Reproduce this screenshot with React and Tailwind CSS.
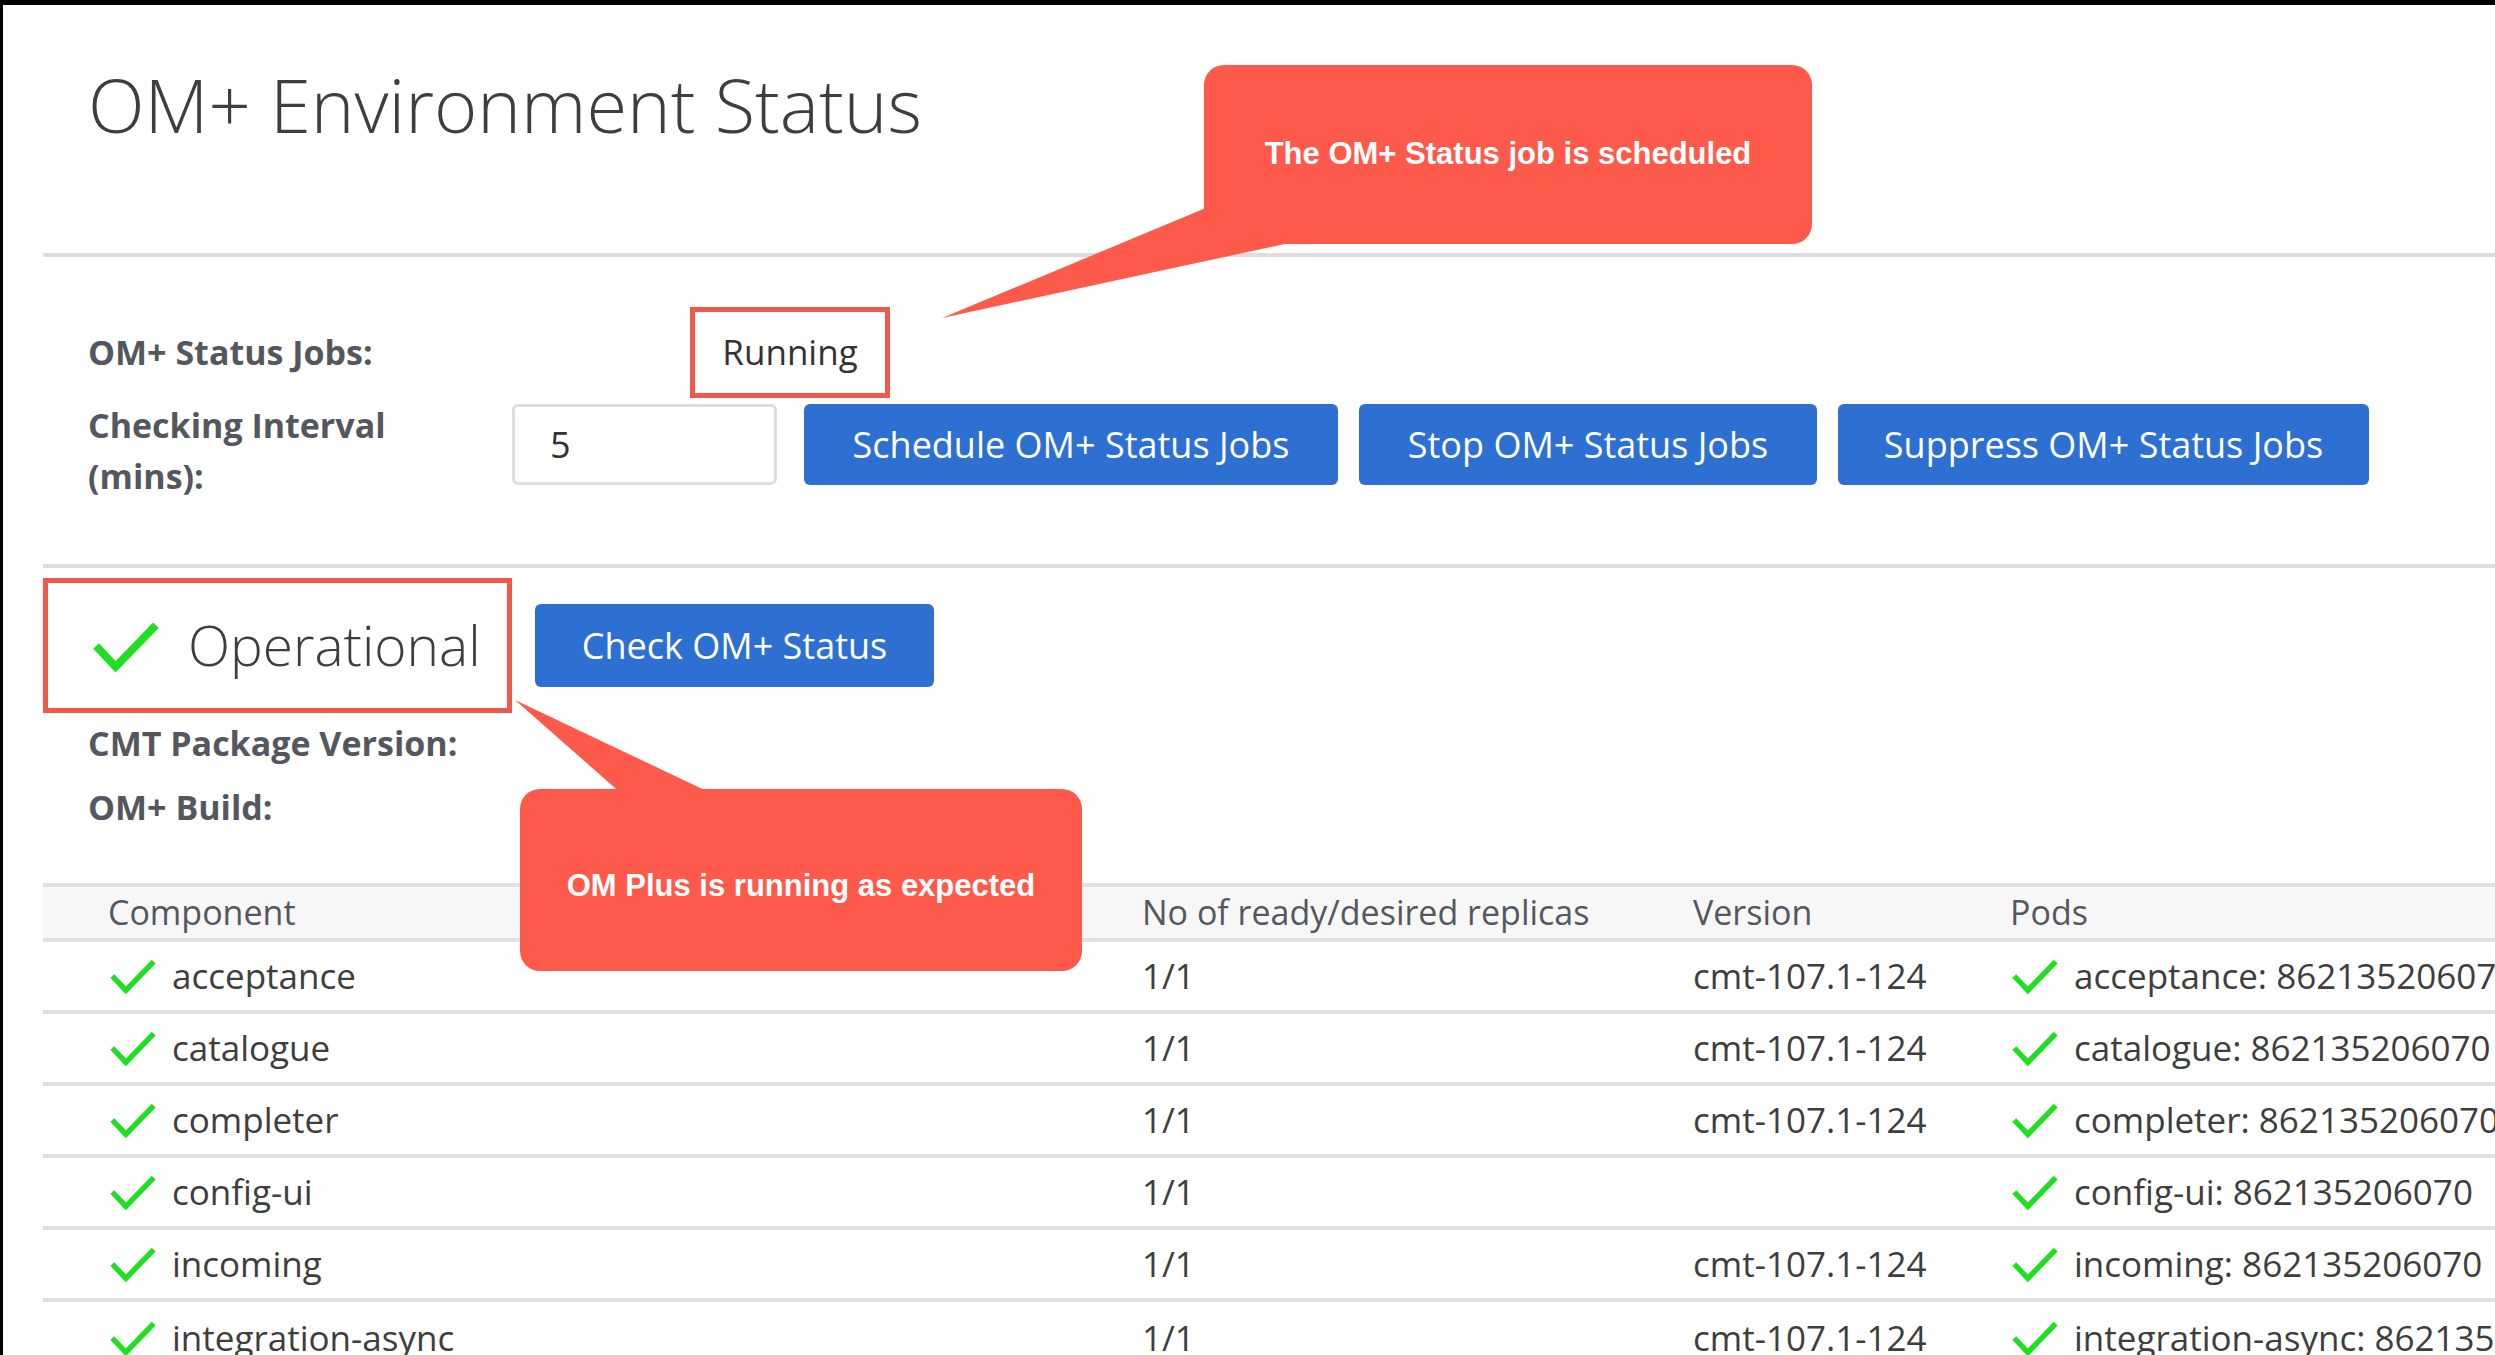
import React from "react";

const font = { fontFamily: '"Open Sans", "Noto Sans", sans-serif' };

function Check({ w = 52, h = 40 }) {
  return (
    <svg width={w} height={h} viewBox="0 0 52 40" className="shrink-0">
      <path d="M3 20 L18 36 L49 4" fill="none" stroke="#1ee01e" strokeWidth="6" strokeLinejoin="miter" />
    </svg>
  );
}

const rows = [
  ["acceptance", "cmt-107.1-124", "acceptance: 86213520607"],
  ["catalogue", "cmt-107.1-124", "catalogue: 862135206070"],
  ["completer", "cmt-107.1-124", "completer: 862135206070"],
  ["config-ui", "", "config-ui: 862135206070"],
  ["incoming", "cmt-107.1-124", "incoming: 862135206070"],
  ["integration-async", "cmt-107.1-124", "integration-async: 862135206070"],
];

export default function App() {
  return (
    <div className="relative w-[2495px] h-[1355px] overflow-hidden bg-white border-t-[5px] border-l-[3px] border-black text-[#3e3e3c]" style={font}>
      <h1 className="ml-[85px] mt-[55px] text-[74px] leading-[90px] font-light text-[#3e3e3c]">OM+ Environment Status</h1>
      <div className="ml-[40px] mt-[103px] h-[4px] bg-[#dcdcdc]" />
      <div className="ml-[85px] mt-[50px]">
        <div className="flex items-center">
          <div className="w-[602px] shrink-0 text-[34px] font-bold text-[#54585e]">OM+ Status Jobs:</div>
          <div className="w-[200px] shrink-0 h-[91px] border-[5px] border-[#f0584b] flex items-center justify-center text-[35px] text-[#333]">Running</div>
        </div>
        <div className="flex items-start mt-[6px]">
          <div className="w-[424px] shrink-0 text-[34px] font-bold text-[#54585e] leading-[51px] mt-[-4px]">Checking Interval<br />(mins):</div>
          <div className="w-[265px] shrink-0 h-[81px] border-[3px] border-[#dddddd] rounded-[6px] flex items-center pl-[35px] text-[36px] text-[#333]">5</div>
          <div className="flex gap-[21px] ml-[27px]">
            {["Schedule OM+ Status Jobs", "Stop OM+ Status Jobs", "Suppress OM+ Status Jobs"].map((t, i) => (
              <div key={t} className={`shrink-0 h-[81px] bg-[#2d70d2] rounded-[6px] text-white text-[36px] flex items-center justify-center ${i === 0 ? "w-[534px]" : i === 1 ? "w-[458px]" : "w-[531px]"}`}>{t}</div>
            ))}
          </div>
        </div>
      </div>
      <div className="ml-[40px] mt-[62px] h-[4px] bg-[#dcdcdc]" />
      <div className="ml-[40px] mt-[10px] flex items-center">
        <div className="w-[469px] shrink-0 h-[135px] border-[5px] border-[#f0584b] flex items-center pl-[42px] gap-[26px]">
          <Check w={72} h={52} />
          <span className="text-[55px] text-[#3e3e3c] font-light">Operational</span>
        </div>
        <div className="ml-[23px] w-[399px] h-[83px] bg-[#2d70d2] rounded-[6px] text-white text-[36px] flex items-center justify-center">Check OM+ Status</div>
      </div>
      <div className="ml-[85px] mt-[2px] text-[34px] font-bold text-[#54585e] leading-[56px]">CMT Package Version:</div>
      <div className="ml-[85px] mt-[8px] text-[34px] font-bold text-[#54585e] leading-[56px]">OM+ Build:</div>
      <div className="ml-[40px] mt-[48px]">
        <div className="flex items-center h-[59px] bg-[#f7f7f7] border-t-[4px] border-b-[4px] border-[#e0e0e0] text-[34px] text-[#54585e] whitespace-nowrap">
          <div className="w-[1099px] shrink-0 pl-[65px]">Component</div>
          <div className="w-[551px] shrink-0">No of ready/desired replicas</div>
          <div className="w-[317px] shrink-0">Version</div>
          <div className="flex-1">Pods</div>
        </div>
        {rows.map((r, i) => (
          <div key={r[0]} className={`flex items-center h-[72px] text-[35px] text-[#3e3e3c] whitespace-nowrap ${i < 5 ? "border-b-[4px] border-[#e0e0e0]" : ""}`}>
            <div className="w-[1099px] shrink-0 pl-[65px] flex items-center gap-[14px]"><Check w={50} h={36} /><span>{r[0]}</span></div>
            <div className="w-[551px] shrink-0">1/1</div>
            <div className="w-[317px] shrink-0">{r[1]}</div>
            <div className="flex-1 flex items-center gap-[14px]"><Check w={50} h={36} /><span>{r[2]}</span></div>
          </div>
        ))}
      </div>

      <svg className="absolute left-0 top-0" width="2495" height="1355" style={{ pointerEvents: "none" }}>
        <polygon points="1210,200 939,313 1300,235" fill="#fe5a4c" />
        <polygon points="512,695 620,790 712,790" fill="#fe5a4c" />
      </svg>
      <div className="absolute left-[1201px] top-[60px] w-[608px] h-[179px] bg-[#fe5a4c] rounded-[20px] flex items-center justify-center text-white font-bold text-[31px]" style={{ fontFamily: '"Liberation Sans", Arial, sans-serif' }}>The OM+ Status job is scheduled</div>
      <div className="absolute left-[517px] top-[784px] w-[562px] h-[182px] bg-[#fe5a4c] rounded-[20px] flex items-start justify-center pt-[74px] text-white font-bold text-[31px]" style={{ fontFamily: '"Liberation Sans", Arial, sans-serif' }}>OM Plus is running as expected</div>
    </div>
  );
}
